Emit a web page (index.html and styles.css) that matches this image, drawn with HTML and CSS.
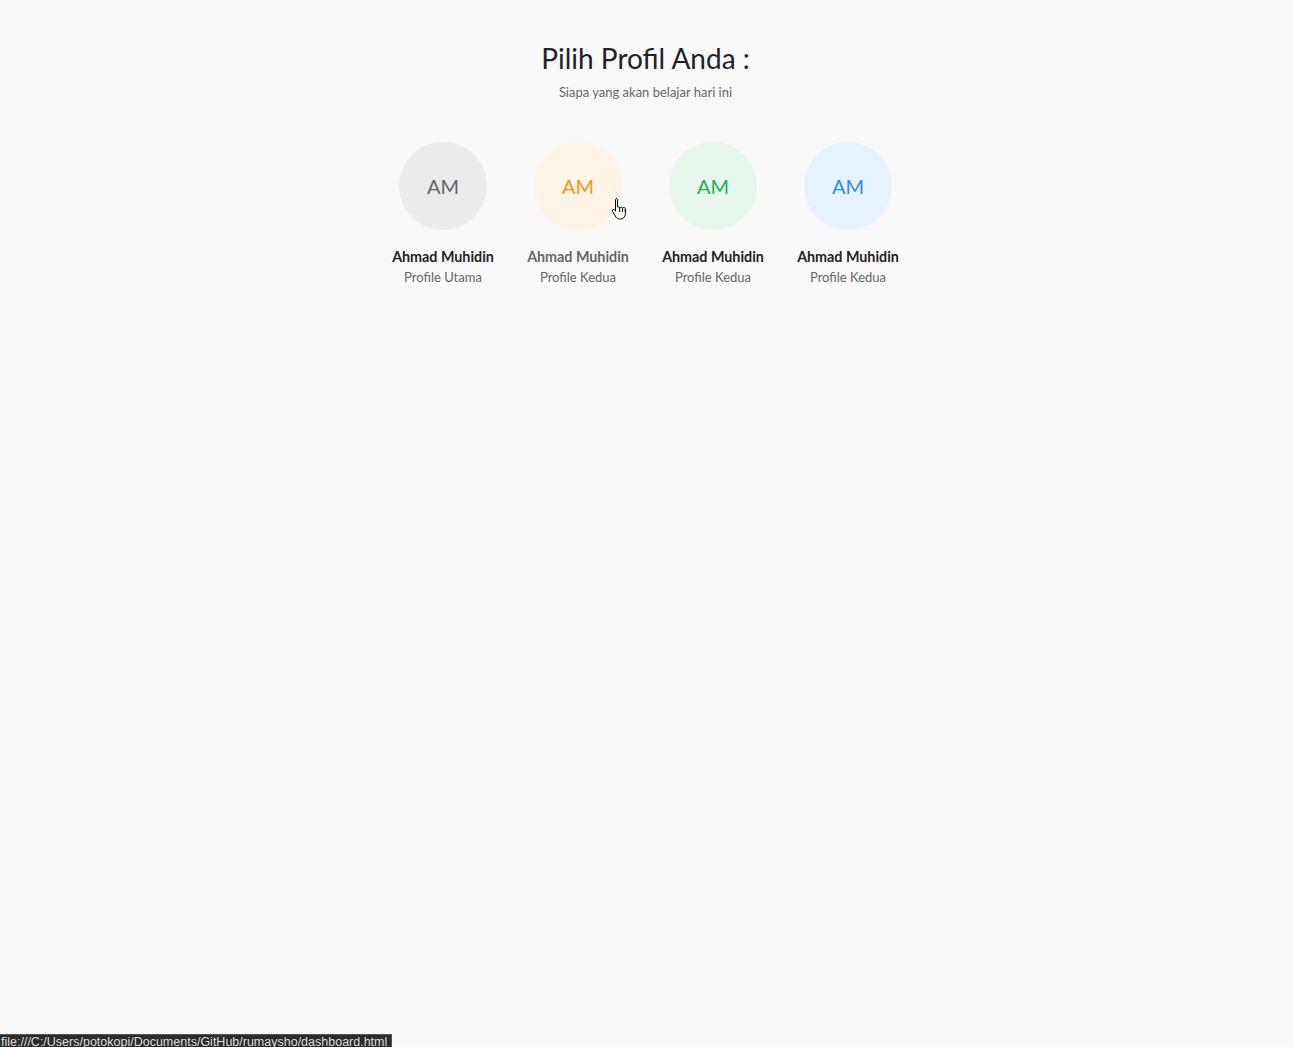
FILE: index.html
```html
<!DOCTYPE html>
<html lang="id">
<head>
<meta charset="utf-8">
<title>Pilih Profil</title>
<link rel="stylesheet" href="styles.css">
</head>
<body>
<main class="page">
  <h1 class="title">Pilih Profil Anda :</h1>
  <p class="subtitle">Siapa yang akan belajar hari ini</p>
  <div class="profiles">
    <div class="profile">
      <div class="avatar gray">AM</div>
      <div class="name">Ahmad Muhidin</div>
      <div class="role">Profile Utama</div>
    </div>
    <div class="profile hover">
      <div class="avatar orange">AM</div>
      <div class="name">Ahmad Muhidin</div>
      <div class="role">Profile Kedua</div>
      <svg class="cursor" width="18" height="24" viewBox="0 0 18 24">
        <path d="M5 1.5c.9 0 1.5.6 1.5 1.5v7l.8-.1c.9 0 1.4.5 1.4 1.2.2-.7.8-1 1.4-1 .8 0 1.3.5 1.4 1.2.3-.5.8-.8 1.4-.8.9 0 1.5.7 1.5 1.6v4.4c0 3.3-2 5.5-5 5.5H8.5c-1.6 0-2.7-.7-3.6-2L1.6 14.6c-.5-.8-.3-1.6.4-2 .7-.4 1.4-.1 1.9.6l.6.9V3c0-.9.6-1.5 1.5-1.5z" fill="#fff" stroke="#000" stroke-width="1"/>
        <path d="M8.7 11v4M11.5 11.5V15M14.3 12.2V15" stroke="#000" stroke-width="1" fill="none"/>
      </svg>
    </div>
    <div class="profile">
      <div class="avatar green">AM</div>
      <div class="name">Ahmad Muhidin</div>
      <div class="role">Profile Kedua</div>
    </div>
    <div class="profile">
      <div class="avatar blue">AM</div>
      <div class="name">Ahmad Muhidin</div>
      <div class="role">Profile Kedua</div>
    </div>
  </div>
</main>
<div class="statusbar">file:///C:/Users/potokopi/Documents/GitHub/rumaysho/dashboard.html</div>
</body>
</html>
```
FILE: styles.css
```css
html, body {
  margin: 0;
  padding: 0;
  background: #f9f9f9;
  height: 100%;
}
body {
  font-family: Lato, "Open Sans", sans-serif;
  color: #222;
}
.page {
  display: flex;
  flex-direction: column;
  align-items: center;
  padding-top: 39px;
  padding-right: 2px;
}
.title {
  margin: 0;
  font-size: 28px;
  font-weight: 400;
  line-height: 38px;
  color: #1f2328;
}
.subtitle {
  margin: 7px 0 0;
  font-size: 13px;
  line-height: 16px;
  color: #666;
}
.profiles {
  display: flex;
  margin-top: 42px;
}
.profile {
  position: relative;
  width: 135px;
  display: flex;
  flex-direction: column;
  align-items: center;
}
.avatar {
  width: 88px;
  height: 88px;
  border-radius: 50%;
  display: flex;
  align-items: center;
  justify-content: center;
  font-size: 20px;
  line-height: 1;
}
.gray { background: #ebebeb; color: #666; }
.orange { background: #fff4e5; color: #f7931e; }
.green { background: #e7f7ec; color: #22b14c; }
.blue { background: #e7f2ff; color: #2f8af5; }
.name {
  margin-top: 18px;
  font-size: 14.3px;
  font-weight: 700;
  line-height: 18px;
  color: #222;
}
.role {
  margin-top: 3px;
  font-size: 13px;
  line-height: 16px;
  color: #666;
}
.hover .name { color: #666; }
.cursor {
  position: absolute;
  left: 100px;
  top: 55px;
}
.statusbar {
  position: fixed;
  left: 0;
  bottom: -4px;
  width: 390px;
  height: 15px;
  padding-left: 1px;
  background: #2b2b2b;
  border: 1px solid #555;
  border-left: none;
  color: #ddd;
  font-family: "Liberation Sans", Arial, sans-serif;
  font-size: 12.5px;
  line-height: 15px;
  white-space: nowrap;
  overflow: hidden;
}
```
